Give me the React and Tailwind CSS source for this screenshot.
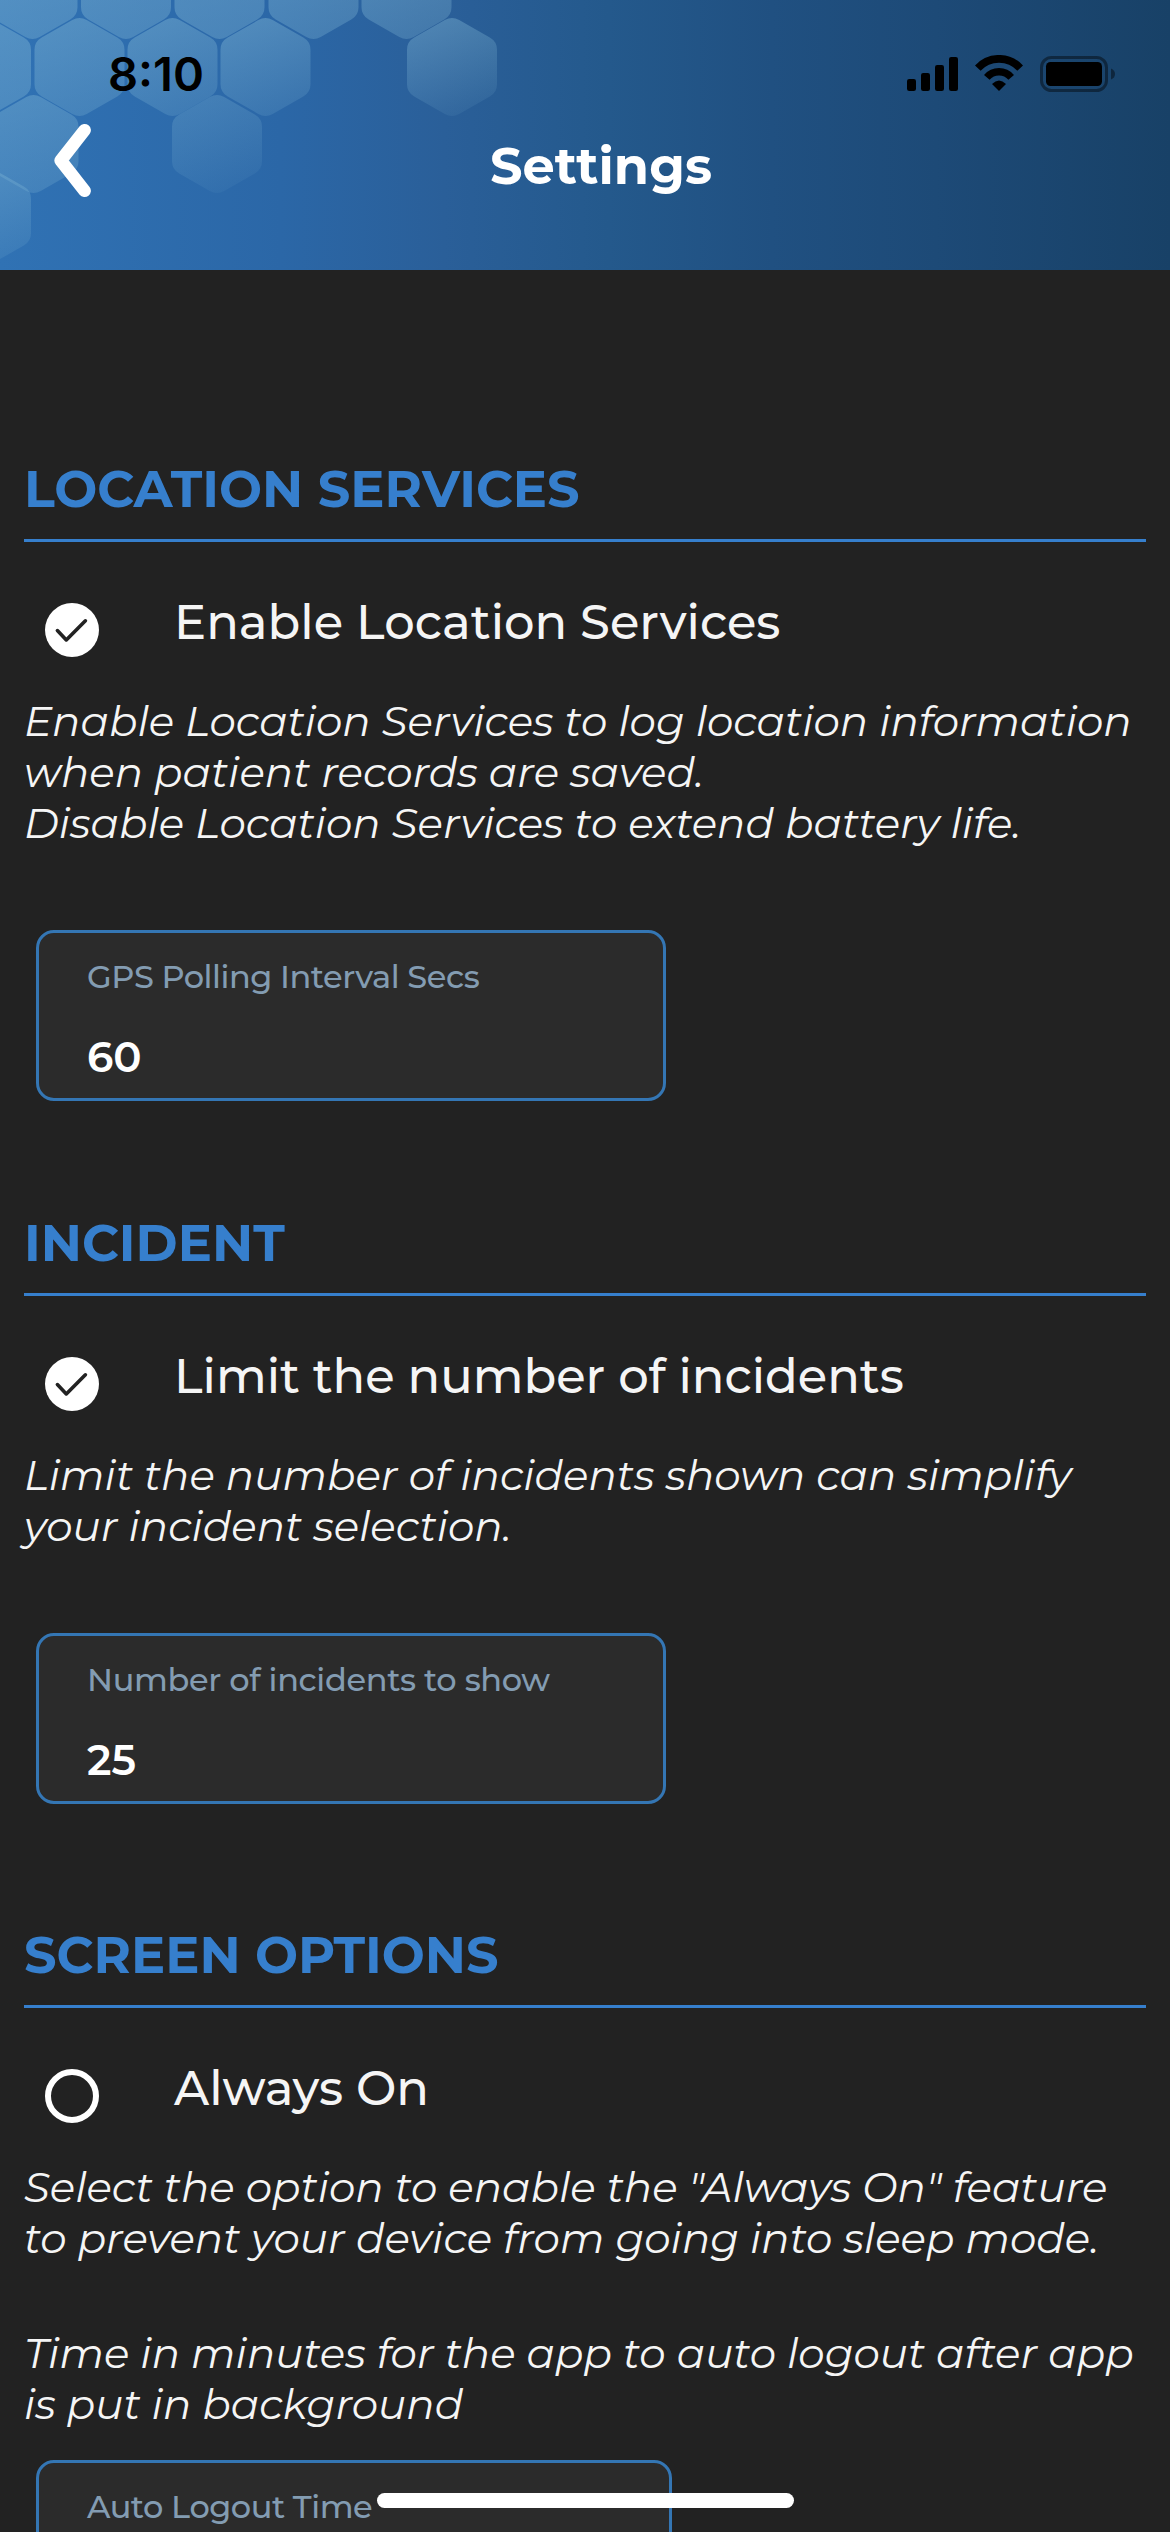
/* Pointy-top hexagon with softened corners, centred on (cx, cy). */
function hexPath(cx, cy) {
  const w = 45;
  const h = 51;
  const pts = [
    [cx, cy - h],
    [cx + w, cy - h / 2],
    [cx + w, cy + h / 2],
    [cx, cy + h],
    [cx - w, cy + h / 2],
    [cx - w, cy - h / 2],
  ];
  const t = 0.16;
  const lerp = (a, b) => [a[0] + (b[0] - a[0]) * t, a[1] + (b[1] - a[1]) * t];
  return (
    pts
      .map((p, i) => {
        const prev = pts[(i + 5) % 6];
        const next = pts[(i + 1) % 6];
        const a = lerp(p, prev);
        const b = lerp(p, next);
        return `${i ? "L" : "M"}${a[0]} ${a[1]}Q${p[0]} ${p[1]} ${b[0]} ${b[1]}`;
      })
      .join("") + "Z"
  );
}

// [cx, cy, opacity at the top, opacity at the bottom]
const HEXES = [
  [32.5, -10, 0.46, 0.34],
  [126, -10, 0.44, 0.33],
  [219.5, -10, 0.44, 0.33],
  [313.5, -10, 0.44, 0.29],
  [406.5, -10, 0.44, 0.27],
  [-14, 67, 0.44, 0.32],
  [79.5, 67, 0.42, 0.25],
  [172.5, 67, 0.42, 0.2],
  [265.5, 67, 0.42, 0.16],
  [452, 67, 0.4, 0.08],
  [33.5, 144, 0.38, 0.22],
  [217, 144, 0.27, 0.06],
  [-14, 216, 0.38, 0.12],
];

function HexPattern() {
  return (
    <svg className="absolute left-0 top-0" width="520" height="270" viewBox="0 0 520 270" aria-hidden="true">
      <defs>
        {HEXES.map(([, , a, b], i) => (
          <linearGradient key={i} id={`hex${i}`} x1="0.35" y1="0" x2="0.65" y2="1">
            <stop offset="0" stopColor="#86bcd8" stopOpacity={a} />
            <stop offset="1" stopColor="#86bcd8" stopOpacity={b} />
          </linearGradient>
        ))}
      </defs>
      {HEXES.map(([x, y], i) => (
        <path key={i} d={hexPath(x, y)} fill={`url(#hex${i})`} />
      ))}
    </svg>
  );
}

function StatusBar() {
  return (
    <div className="relative flex h-[110px] items-start justify-between pl-[108px] pr-[55px] text-black">
      <span className="mt-[46px] font-[Inter,sans-serif] text-[47px] font-semibold leading-[56px]">8:10</span>
      <div className="mt-[55px] flex items-start">
        <svg width="51" height="36" viewBox="0 0 51 36">
          <rect x="0" y="24" width="9" height="12" rx="2.2" />
          <rect x="14" y="18" width="9" height="18" rx="2.2" />
          <rect x="28" y="10" width="9" height="26" rx="2.2" />
          <rect x="42" y="2" width="9" height="34" rx="2.2" />
        </svg>
        <svg className="ml-[17px]" width="48" height="36" viewBox="0 0 48 36" fill="none">
          <path d="M2.8 13.1A28.85 28.85 0 0 1 45.2 13.1" stroke="#000" strokeWidth="7.7" />
          <path d="M11.8 22.4A16 16 0 0 1 36.2 22.4" stroke="#000" strokeWidth="7.3" />
          <path d="M24 36L17 29Q24 21.8 31 29Z" fill="#000" />
        </svg>
        <svg className="ml-[17px] mt-px" width="75" height="36" viewBox="0 0 75 36">
          <rect x="1.5" y="1.5" width="65" height="33" rx="10" fill="none" stroke="#000" strokeOpacity="0.42" strokeWidth="3" />
          <rect x="6" y="6" width="56" height="24" rx="4.5" />
          <path d="M71 12.5Q75 14 75 18T71 23.5Z" fillOpacity="0.42" />
        </svg>
      </div>
    </div>
  );
}

function Header() {
  return (
    <header className="relative h-[270px] shrink-0 overflow-hidden bg-[linear-gradient(90deg,#3072b4_0%,#2b67a7_24%,#2a5f99_38%,#24598c_52%,#205081_66%,#1d4a77_80%,#184167_100%)]">
      <HexPattern />
      <StatusBar />
      <div className="relative flex items-start pl-[54px]">
        <svg className="mt-[13px]" width="38" height="75" viewBox="0 0 38 75" fill="none">
          <path d="M30.6 7.2L6.8 37.5L30.6 67.8" stroke="#fff" strokeWidth="12.6" strokeLinecap="round" strokeLinejoin="round" />
        </svg>
        <h1 className="ml-[398px] mt-[25px] text-[51px] font-bold leading-[62px] text-white">Settings</h1>
      </div>
    </header>
  );
}

function SectionTitle({ children }) {
  return (
    <h2 className="border-b-[3px] border-[#367fcd] pb-[19px] text-[51px] font-bold leading-[62px] text-[#367fcd]">
      {children}
    </h2>
  );
}

function CheckRow({ checked, label }) {
  return (
    <label className="mt-[50px] flex h-[66px] items-start pl-[21px]">
      <svg className="mt-[11px]" width="54" height="54" viewBox="0 0 54 54" fill="none">
        {checked ? (
          <>
            <circle cx="27" cy="27" r="27" fill="#fff" />
            <path d="M12.4 27.6L21.3 36.9L40.4 17.8" stroke="#222" strokeWidth="3.6" strokeLinecap="round" strokeLinejoin="round" />
          </>
        ) : (
          <circle cx="27" cy="27" r="24" stroke="#fff" strokeWidth="6" />
        )}
      </svg>
      <span className="ml-[75px] mt-px text-[48px] font-medium leading-[59px] text-[#f5f5f5]">{label}</span>
    </label>
  );
}

function Note({ className, lines }) {
  return (
    <p className={`whitespace-nowrap text-[42px] font-normal italic leading-[51px] text-[#f5f5f5] ${className}`}>
      {lines.map((l) => (
        <span key={l} className="block">{l}</span>
      ))}
    </p>
  );
}

function Field({ className, labelClass = "tracking-[-0.46px]", label, value }) {
  return (
    <div className={`ml-3 h-[171px] shrink-0 rounded-[18px] border-[3px] border-[#3476b4] bg-[#2b2b2b] pl-12 pt-6 ${className}`}>
      <div className={`text-[32px] font-medium leading-[39px] text-[#839cb2] ${labelClass}`}>{label}</div>
      <div className="mt-9 text-[42px] font-semibold leading-[51px] text-white">{value}</div>
    </div>
  );
}

export default function App() {
  return (
    <div className="relative flex h-[2532px] w-[1170px] flex-col overflow-hidden bg-[#222] font-[Montserrat,Inter,sans-serif]">
      <Header />
      <main className="flex flex-col px-6 pt-[188px]">
        <section>
          <SectionTitle>LOCATION SERVICES</SectionTitle>
          <CheckRow checked label="Enable Location Services" />
          <Note
            className="mt-[38px]"
            lines={[
              "Enable Location Services to log location information",
              "when patient records are saved.",
              "Disable Location Services to extend battery life.",
            ]}
          />
          <Field className="mt-[81px] w-[630px]" label="GPS Polling Interval Secs" value="60" />
        </section>
        <section className="mt-[111px]">
          <SectionTitle>INCIDENT</SectionTitle>
          <CheckRow checked label="Limit the number of incidents" />
          <Note className="mt-[38px]" lines={["Limit the number of incidents shown can simplify", "your incident selection."]} />
          <Field
            className="mt-[81px] w-[630px]"
            labelClass="tracking-[-0.33px]"
            label="Number of incidents to show"
            value="25"
          />
        </section>
        <section className="mt-[120px]">
          <SectionTitle>SCREEN OPTIONS</SectionTitle>
          <CheckRow label="Always On" />
          <Note
            className="mt-[38px]"
            lines={['Select the option to enable the "Always On" feature', "to prevent your device from going into sleep mode."]}
          />
          <Note className="mt-[64px]" lines={["Time in minutes for the app to auto logout after app", "is put in background"]} />
          <Field className="mt-[30px] w-[636px]" label="Auto Logout Time" value="" />
        </section>
      </main>
      <div className="absolute bottom-6 left-[377px] h-[15px] w-[417px] rounded-full bg-white" />
    </div>
  );
}
